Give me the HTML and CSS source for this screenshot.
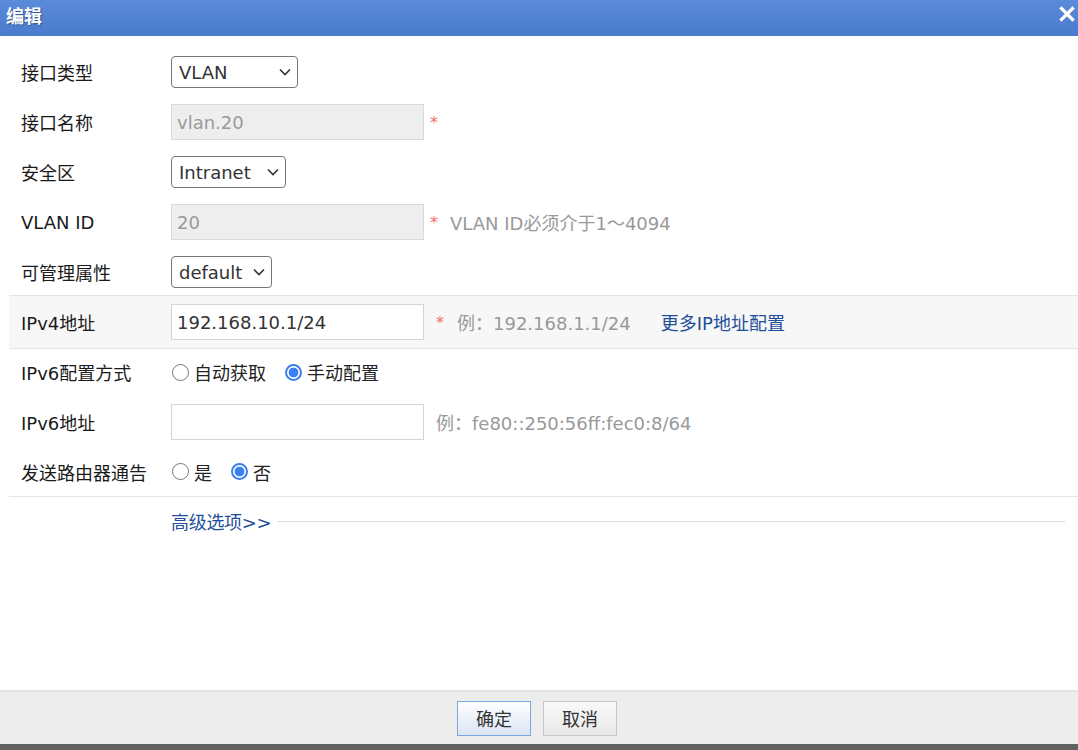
FILE: index.html
```html
<!DOCTYPE html>
<html lang="zh-CN">
<head>
<meta charset="utf-8">
<title>编辑</title>
<link rel="stylesheet" href="styles.css">
</head>
<body>
<div class="dialog">
  <div class="titlebar">
    <span class="title">编辑</span>
    <span class="close">
      <svg width="16" height="16" viewBox="0 0 16 16"><path d="M2.5 2.5 L13.5 13.5 M13.5 2.5 L2.5 13.5" stroke="#fff" stroke-width="3.2" stroke-linecap="square"/></svg>
    </span>
  </div>
  <div class="form">
    <div class="row">
      <span class="label">接口类型</span>
      <span class="selwrap sel-type">
        <select class="sel"><option>VLAN</option></select>
        <svg class="chev" width="12" height="8" viewBox="0 0 12 8"><path d="M1 1.5 L6 6.5 L11 1.5" fill="none" stroke="#333" stroke-width="1.6"/></svg>
      </span>
    </div>
    <div class="row">
      <span class="label">接口名称</span>
      <input class="inp" type="text" value="vlan.20" disabled>
      <span class="req">*</span>
    </div>
    <div class="row">
      <span class="label">安全区</span>
      <span class="selwrap sel-zone">
        <select class="sel"><option>Intranet</option></select>
        <svg class="chev" width="12" height="8" viewBox="0 0 12 8"><path d="M1 1.5 L6 6.5 L11 1.5" fill="none" stroke="#333" stroke-width="1.6"/></svg>
      </span>
    </div>
    <div class="row">
      <span class="label">VLAN ID</span>
      <input class="inp" type="text" value="20" disabled>
      <span class="req">*</span>
      <span class="hint">VLAN ID必须介于1～4094</span>
    </div>
    <div class="row">
      <span class="label">可管理属性</span>
      <span class="selwrap sel-mgmt">
        <select class="sel"><option>default</option></select>
        <svg class="chev" width="12" height="8" viewBox="0 0 12 8"><path d="M1 1.5 L6 6.5 L11 1.5" fill="none" stroke="#333" stroke-width="1.6"/></svg>
      </span>
    </div>
    <div class="row hl">
      <span class="label">IPv4地址</span>
      <input class="inp" type="text" value="192.168.10.1/24">
      <span class="req req-wide">*</span>
      <span class="hint hint-ex">例：192.168.1.1/24</span>
      <a class="link" href="#">更多IP地址配置</a>
    </div>
    <div class="row">
      <span class="label">IPv6配置方式</span>
      <label class="radio"><input type="radio" name="v6"><span>自动获取</span></label>
      <label class="radio"><input type="radio" name="v6" checked><span>手动配置</span></label>
    </div>
    <div class="row">
      <span class="label">IPv6地址</span>
      <input class="inp" type="text" value="">
      <span class="hint">例：fe80::250:56ff:fec0:8/64</span>
    </div>
    <div class="row last">
      <span class="label">发送路由器通告</span>
      <label class="radio"><input type="radio" name="ra"><span>是</span></label>
      <label class="radio"><input type="radio" name="ra" checked><span>否</span></label>
    </div>
    <div class="adv">
      <a class="link" href="#">高级选项&gt;&gt;</a>
      <span class="adv-line"></span>
    </div>
  </div>
  <div class="footer">
    <button class="btn btn-ok">确定</button>
    <button class="btn">取消</button>
  </div>
  <div class="bottombar"></div>
</div>
</body>
</html>
```

FILE: styles.css
```css
html, body {
  margin: 0;
  padding: 0;
  height: 100%;
  background: #fff;
}
body {
  font-family: "DejaVu Sans", "Noto Sans CJK SC", sans-serif;
  font-size: 18px;
  color: #222;
}
.dialog {
  display: flex;
  flex-direction: column;
  height: 100vh;
}
.titlebar {
  height: 36px;
  flex: 0 0 36px;
  background: linear-gradient(#5b8bda, #4a7bcc);
  display: flex;
  align-items: center;
  justify-content: space-between;
  padding: 0 3px 0 6px;
  box-sizing: border-box;
}
.title {
  color: #fff;
  font-weight: bold;
  font-size: 18px;
  font-family: "Noto Sans CJK SC", sans-serif;
  text-shadow: 1px 1px 1px rgba(0, 0, 0, 0.35);
  margin-bottom: 6px;
}
.close {
  display: flex;
  margin-bottom: 8px;
}
.form {
  flex: 1;
  padding: 11px 0 0 9px;
}
.row {
  display: flex;
  align-items: center;
  height: 50px;
  padding-left: 12px;
  box-sizing: border-box;
}
.row.hl {
  height: 54px;
  margin: -2px 0;
  background: #f7f7f7;
  border-top: 1px solid #e3e3e3;
  border-bottom: 1px solid #e3e3e3;
}
.row.last {
  border-bottom: 1px solid #e6e6e6;
}
.label {
  width: 150px;
  flex: 0 0 150px;
  color: #1a1a1a;
}
.selwrap {
  position: relative;
  display: inline-flex;
  height: 32px;
}
.sel {
  width: 100%;
  height: 32px;
  font-family: inherit;
  font-size: 18px;
  color: #333;
  border: 1px solid #767676;
  border-radius: 4px;
  background: #fff;
  padding: 0 24px 0 7px;
  box-sizing: border-box;
  appearance: none;
  -webkit-appearance: none;
  margin: 0;
}
.chev {
  position: absolute;
  right: 7px;
  top: 12px;
  pointer-events: none;
}
.sel-type { width: 127px; }
.sel-zone { width: 115px; }
.sel-mgmt { width: 101px; }
.inp {
  width: 253px;
  height: 36px;
  box-sizing: border-box;
  border: 1px solid #d4d4d4;
  padding: 0 5px;
  font-family: inherit;
  font-size: 18px;
  color: #333;
  background: #fff;
  margin: 0;
  outline: none;
}
.inp:disabled {
  background: #eeeeee;
  border-color: #dadada;
  color: #9a9a9a;
}
.req {
  color: #f06e6e;
  margin-left: 6px;
  font-size: 16px;
}
.req-wide {
  margin-left: 12px;
}
.hint {
  color: #999;
  margin-left: 12px;
}
.hint-ex {
  margin-left: 13px;
}
.link {
  color: #1f4f9b;
  text-decoration: none;
  margin-left: 30px;
}
.radio {
  display: flex;
  align-items: center;
  margin-right: 18px;
}
.radio input {
  appearance: none;
  -webkit-appearance: none;
  width: 17px;
  height: 17px;
  margin: 0 5px 0 1px;
  border: 1.5px solid #767676;
  border-radius: 50%;
  background: #fff;
  box-sizing: border-box;
}
.radio input:checked {
  border: 2px solid #3b7ff0;
  background: radial-gradient(circle, #3b7ff0 0, #3b7ff0 4.6px, #fff 5.2px);
}
.adv {
  display: flex;
  align-items: center;
  height: 48px;
  padding-left: 162px;
}
.adv .link {
  margin-left: 0;
  letter-spacing: -0.3px;
}
.adv-line {
  flex: 1;
  border-top: 1px solid #dcdcdc;
  margin: 0 13px 0 6px;
}
.footer {
  flex: 0 0 54px;
  box-sizing: border-box;
  border-top: 2px solid #e4e4e4;
  background: #ededed;
  display: flex;
  justify-content: center;
  align-items: center;
  gap: 12px;
  padding-right: 4px;
}
.btn {
  width: 74px;
  height: 35px;
  font-family: "Noto Sans CJK SC", sans-serif;
  font-size: 18px;
  color: #333;
  border: 1px solid #c9c9c9;
  background: linear-gradient(#f9f9f9, #e8e8e8);
  padding: 0;
  margin: 0;
}
.btn-ok {
  border-color: #7aa5e0;
  background: linear-gradient(#ffffff, #dae5f5);
}
.bottombar {
  flex: 0 0 6px;
  background: #616161;
}
```
